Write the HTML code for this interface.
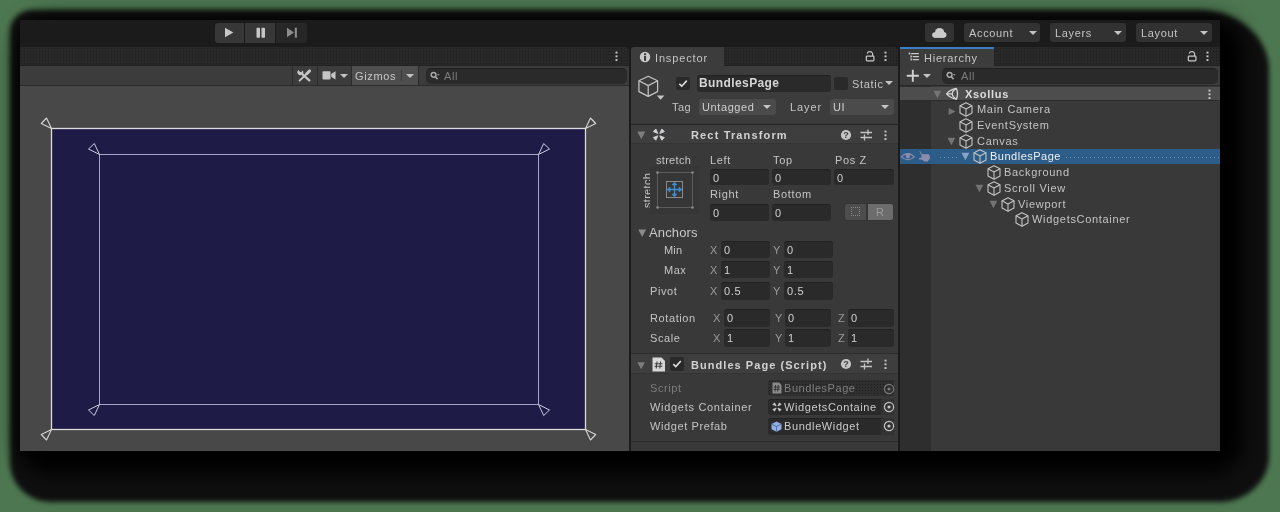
<!DOCTYPE html>
<html><head><meta charset="utf-8">
<style>
*{box-sizing:border-box;margin:0;padding:0}
html,body{width:1280px;height:512px;overflow:hidden;background:#4d7751;font-family:"Liberation Sans",sans-serif;}
#root{position:absolute;left:0;top:0;width:1280px;height:512px;will-change:transform}
.a{position:absolute}
#shadow{left:10px;top:10px;width:1259px;height:492px;background:#0f0f0f;border-radius:22px 70px 50px 40px / 22px 60px 46px 40px;filter:blur(2.6px)}
#shadow2{left:18px;top:18px;width:1225px;height:455px;background:#000;border-radius:30px;filter:blur(10px)}
#win{left:20px;top:20px;width:1200px;height:431px;background:#1b1b1b}
.dots{background-color:#282828;background-image:radial-gradient(circle,#1e1e1e 0.6px,transparent 0.9px);background-size:3px 3px;}
.t{position:absolute;white-space:nowrap;color:#c4c4c4;font-size:11px;line-height:12px;letter-spacing:.65px}
.b{font-weight:bold}
.fld{position:absolute;background:#2a2a2a;border-radius:3px;border-top:1px solid #212121}
.btn{position:absolute;background:#323232;border-radius:3px}
.arr{position:absolute;width:0;height:0;border-left:4px solid transparent;border-right:4px solid transparent;border-top:4.5px solid #c4c4c4}
.menu{position:absolute;width:3px;height:10px;background:radial-gradient(circle,#c8c8c8 0.9px,transparent 1.3px);background-size:3px 3.75px;background-position:0 -0.3px}
.sep{position:absolute;background:#2b2b2b}
</style></head><body><div id="root">
<div id="shadow" class="a"></div>
<div id="shadow2" class="a"></div>
<div id="win" class="a"></div>

<!-- ===== top toolbar ===== -->
<div class="btn" style="left:215px;top:23px;width:29px;height:20px;background:#373737;border-radius:3px 0 0 3px"></div>
<div class="btn" style="left:245px;top:23px;width:30px;height:20px;background:#373737;border-radius:0"></div>
<div class="btn dots" style="left:276px;top:23px;width:31px;height:20px;background-color:#272727;border-radius:0 3px 3px 0"></div>
<svg class="a" style="left:224px;top:27px" width="10" height="11"><path d="M1 0.7 L9.4 5.5 L1 10.3Z" fill="#c6c6c6"/></svg>
<svg class="a" style="left:256px;top:27px" width="10" height="11"><rect x="0.5" y="0.7" width="3.5" height="10" rx="0.8" fill="#c6c6c6"/><rect x="5.5" y="0.7" width="3.5" height="10" rx="0.8" fill="#c6c6c6"/></svg>
<svg class="a" style="left:286px;top:27px" width="12" height="11"><path d="M1 0.7 L8 5.5 L1 10.3Z" fill="#8c8c8c"/><rect x="8.8" y="0.7" width="2.1" height="10" fill="#8c8c8c"/></svg>

<div class="btn" style="left:925px;top:23px;width:29px;height:19px"></div>
<svg class="a" style="left:930px;top:26px" width="18" height="14" viewBox="930 26 18 14"><g fill="#cacaca"><circle cx="939.6" cy="32.6" r="4.6"/><circle cx="934.9" cy="35" r="2.8"/><circle cx="943.6" cy="34.8" r="2.9"/><rect x="934.5" y="34" width="9" height="3.9"/></g></svg>
<div class="btn" style="left:964px;top:23px;width:76px;height:19px"></div>
<div class="btn" style="left:1050px;top:23px;width:76px;height:19px"></div>
<div class="btn" style="left:1136px;top:23px;width:76px;height:19px"></div>
<div class="t" style="left:969px;top:27px">Account</div>
<div class="t" style="left:1055px;top:27px">Layers</div>
<div class="t" style="left:1141px;top:27px">Layout</div>
<div class="arr" style="left:1029px;top:31px"></div>
<div class="arr" style="left:1114px;top:31px"></div>
<div class="arr" style="left:1200px;top:31px"></div>

<!-- ===== scene panel ===== -->
<div class="a dots" style="left:20px;top:47px;width:609px;height:19px;border-top-right-radius:4px;border-bottom:1px solid #222"></div>
<div class="menu" style="left:615px;top:51px"></div>
<div class="a" style="left:20px;top:66px;width:609px;height:20px;background:#3c3c3c;border-bottom:1px solid #2a2a2a"></div>
<div class="sep" style="left:292px;top:66px;width:1px;height:19px"></div>
<div class="sep" style="left:317px;top:66px;width:1px;height:19px"></div>
<div class="sep" style="left:351px;top:66px;width:1px;height:19px"></div>
<div class="a" style="left:352px;top:66px;width:66px;height:19px;background:#4e4e4e"></div>
<div class="sep" style="left:418px;top:66px;width:1px;height:19px"></div>
<svg class="a" style="left:296px;top:67px" width="17" height="17" viewBox="296 67 17 17">
  <path d="M302.2 74.2 L309.3 80.4" stroke="#c6c6c6" stroke-width="2.3" stroke-linecap="round"/>
  <path d="M298.6 69.9 A2.9 2.9 0 1 0 302.6 70.4 L301.2 72.3 L299.8 71.7 Z" fill="#c6c6c6"/>
  <path d="M299.6 80.6 L307.3 73.2" stroke="#c6c6c6" stroke-width="2" stroke-linecap="round"/>
  <path d="M306.8 73.6 L309.6 70.9" stroke="#c6c6c6" stroke-width="2.9" stroke-linecap="round"/>
</svg>
<svg class="a" style="left:322px;top:71px" width="14" height="9"><rect x="0.5" y="0.3" width="8" height="8.2" rx="0.8" fill="#c6c6c6"/><path d="M9.2 3 L13.5 0.3 L13.5 8.5 L9.2 5.8Z" fill="#c6c6c6"/></svg>
<div class="arr" style="left:340px;top:74px"></div>
<div class="t" style="left:355px;top:70px;color:#c8c8c8">Gizmos</div>
<div class="a" style="left:401px;top:70px;width:1px;height:11px;background:#3a3a3a"></div>
<div class="arr" style="left:406px;top:74px"></div>
<div class="a" style="left:426px;top:68px;width:201px;height:16px;background:#2a2a2a;border-radius:5px;border-top:1px solid #1f1f1f"></div>
<svg class="a" style="left:430px;top:71px" width="10" height="10"><circle cx="3.6" cy="3.8" r="2.4" stroke="#a8a8a8" stroke-width="1.5" fill="none"/><path d="M5.2 5.5 L7.6 8.3" stroke="#a8a8a8" stroke-width="1.6"/><path d="M7 3.2 L9.6 3.2 L8.3 4.8Z" fill="#a8a8a8"/></svg>
<div class="t" style="left:444px;top:70px;color:#7c7c7c">All</div>
<div class="a" style="left:20px;top:86px;width:609px;height:365px;background:#484848"></div>
<svg class="a" style="left:20px;top:86px" width="609" height="365" viewBox="20 86 609 365">
  <rect x="51.5" y="128.5" width="534" height="301" fill="#1e1c46" stroke="#dcdcdc" stroke-width="1.3"/>
  <rect x="99.5" y="154.5" width="439" height="250" fill="none" stroke="#a3a6c8" stroke-width="1"/>
  <g fill="none" stroke="#d4d4d4" stroke-width="1.1" stroke-linejoin="round">
    <path d="M51.5 128.5 L46.5 118 L41.3 123.5 Z"/>
    <path d="M585.5 128.5 L590.5 118 L595.7 123.5 Z"/>
    <path d="M51.5 429.5 L46.5 440 L41.3 434.5 Z"/>
    <path d="M585.5 429.5 L590.5 440 L595.7 434.5 Z"/>
  </g>
  <g fill="none" stroke="#c8cbe0" stroke-width="1" stroke-linejoin="round">
    <path d="M99.5 154.5 L94.3 143.5 L88.5 149 Z"/>
    <path d="M538.5 154.5 L543.7 143.5 L549.5 149 Z"/>
    <path d="M99.5 404.5 L94.3 415.5 L88.5 410 Z"/>
    <path d="M538.5 404.5 L543.7 415.5 L549.5 410 Z"/>
  </g>
</svg>

<!-- INSPECTOR -->
<div class="a" style="left:631px;top:66px;width:267px;height:385px;background:#393939"></div>
<div class="a" style="left:631px;top:66px;width:267px;height:57px;background:#3c3c3c"></div>
<div class="a dots" style="left:631px;top:47px;width:267px;height:19px;border-radius:4px 4px 0 0;border-bottom:1px solid #222"></div>
<div class="a" style="left:631px;top:47px;width:93px;height:19px;background:#3c3c3c;border-top-left-radius:3px"></div>
<svg class="a" style="left:639px;top:51px" width="12" height="12"><circle cx="6" cy="6" r="5.2" fill="#c8c8c8"/><rect x="5" y="2.3" width="2.1" height="1.9" fill="#3c3c3c"/><rect x="5" y="5" width="2.1" height="4.8" fill="#3c3c3c"/></svg>
<div class="t" style="left:655px;top:52px;letter-spacing:.85px">Inspector</div>
<svg class="a" style="left:864px;top:50px" width="12" height="12"><path d="M3.2 3.6 A2.8 2.6 0 0 1 8.6 3.6 V6" stroke="#c8c8c8" stroke-width="1.2" fill="none"/><rect x="2.3" y="6.2" width="7.6" height="4.6" rx="0.8" stroke="#c8c8c8" stroke-width="1.2" fill="none"/></svg>
<div class="menu" style="left:884px;top:51px"></div>

<!-- header -->
<svg class="a" style="left:636px;top:74px" width="30" height="28" viewBox="636 74 30 28"><g fill="none" stroke="#c4c4c4" stroke-width="1.25" stroke-linejoin="round"><path d="M648.2 76.3 L657.6 80.8 L657.6 91.6 L648.2 96.4 L638.9 91.6 L638.9 80.8 Z"/><path d="M638.9 80.8 L648.2 85.6 L657.6 80.8 M648.2 85.6 L648.2 96.4"/></g><path d="M656.8 95.6 L664.4 95.6 L660.6 99.8Z" fill="#c4c4c4"/></svg>
<div class="a" style="left:676px;top:77px;width:14px;height:13px;background:#2a2a2a;border-radius:2px"></div>
<svg class="a" style="left:676px;top:77px" width="14" height="13"><path d="M3.3 6.8 L5.8 9.2 L10.8 3.6" stroke="#e0e0e0" stroke-width="1.6" fill="none"/></svg>
<div class="fld" style="left:697px;top:75px;width:134px;height:17px"></div>
<div class="t b" style="left:699px;top:76px;font-size:12px;line-height:14px;letter-spacing:.4px;color:#d6d6d6">BundlesPage</div>
<div class="a" style="left:834px;top:77px;width:14px;height:13px;background:#2a2a2a;border-radius:2px"></div>
<div class="t" style="left:852px;top:78px;letter-spacing:.7px">Static</div>
<div class="arr" style="left:885px;top:81px"></div>
<div class="t" style="left:672px;top:101px;letter-spacing:.5px">Tag</div>
<div class="a" style="left:699px;top:99px;width:77px;height:16px;background:#4b4b4b;border-radius:3px"></div>
<div class="t" style="left:702px;top:101px;letter-spacing:.6px;color:#cfcfcf">Untagged</div>
<div class="arr" style="left:763px;top:105px"></div>
<div class="t" style="left:790px;top:101px;letter-spacing:.9px">Layer</div>
<div class="a" style="left:830px;top:99px;width:64px;height:16px;background:#4b4b4b;border-radius:3px"></div>
<div class="t" style="left:833px;top:101px;color:#cfcfcf">UI</div>
<div class="arr" style="left:881px;top:105px"></div>
<div class="a" style="left:631px;top:124px;width:267px;height:1px;background:#242424"></div>

<!-- rect transform header -->
<div class="a" style="left:631px;top:125px;width:267px;height:19px;background:#3e3e3e;border-bottom:1px solid #343434"></div>
<svg class="a" style="left:637px;top:131px" width="9" height="9"><path d="M0.3 0.5 L8.3 0.5 L4.3 8.3Z" fill="#7e7e7e"/></svg>
<svg class="a" style="left:652px;top:128px" width="14" height="14" viewBox="652 128 14 14"><g fill="#cfcfd4" stroke="#cfcfd4" stroke-width="1" stroke-linejoin="round"><path d="M653.3 131.6 L655.8 129 L657.8 133.4Z"/><path d="M664.3 131.6 L661.8 129 L659.8 133.4Z"/><path d="M653.3 137.6 L655.8 140.2 L657.8 135.8Z"/><path d="M664.3 137.6 L661.8 140.2 L659.8 135.8Z"/></g></svg>
<div class="t b" style="left:691px;top:129px;letter-spacing:1.15px;color:#d2d2d2">Rect Transform</div>
<svg class="a" style="left:840px;top:129px" width="12" height="12"><circle cx="6" cy="6" r="5.1" fill="#c4c4c4"/><text x="6" y="9.3" font-family="Liberation Sans" font-weight="bold" font-size="9" text-anchor="middle" fill="#3e3e3e">?</text></svg>
<svg class="a" style="left:860px;top:129px" width="13" height="12"><g stroke="#c4c4c4" stroke-width="1.3"><path d="M0.5 3.5 H12 M0.5 8.5 H12"/><path d="M8 0.5 V6 M4.5 5.5 V11.5"/></g></svg>
<div class="menu" style="left:884px;top:130px"></div>

<!-- rect transform body -->
<div class="t" style="left:656px;top:154px;letter-spacing:.3px">stretch</div>
<div class="t" style="left:641px;top:208px;letter-spacing:.3px;transform:rotate(-90deg);transform-origin:0 0">stretch</div>
<div class="a" style="left:650px;top:166px;width:49px;height:48px;background:#363636"></div>
<div class="a" style="left:657px;top:172px;width:36px;height:36px;border:1px solid #5c5c5c"></div><svg class="a" style="left:655px;top:170px" width="40" height="40"><g fill="#8a8a8a"><circle cx="2.5" cy="2.5" r="1.3"/><circle cx="37.5" cy="2.5" r="1.3"/><circle cx="2.5" cy="37.5" r="1.3"/><circle cx="37.5" cy="37.5" r="1.3"/></g></svg>
<div class="a" style="left:666px;top:181px;width:17px;height:17px;border:1px solid #8a8a8a"></div>
<svg class="a" style="left:666px;top:181px" width="17" height="17"><g stroke="#3f90d6" stroke-width="1.3" fill="#3f90d6"><path d="M8.5 3 V14 M3 8.5 H14" fill="none"/><path d="M8.5 1 L6 4 H11Z" stroke-width="0.5"/><path d="M8.5 16 L6 13 H11Z" stroke-width="0.5"/><path d="M1 8.5 L4 6 V11Z" stroke-width="0.5"/><path d="M16 8.5 L13 6 V11Z" stroke-width="0.5"/></g></svg>

<div class="t" style="left:710px;top:154px">Left</div>
<div class="t" style="left:773px;top:154px">Top</div>
<div class="t" style="left:835px;top:154px">Pos Z</div>
<div class="fld" style="left:710px;top:169px;width:59px;height:16px"></div>
<div class="fld" style="left:772px;top:169px;width:59px;height:16px"></div>
<div class="fld" style="left:834px;top:169px;width:60px;height:16px"></div>
<div class="t" style="left:713px;top:172px;color:#d0d0d0">0</div>
<div class="t" style="left:775px;top:172px;color:#d0d0d0">0</div>
<div class="t" style="left:837px;top:172px;color:#d0d0d0">0</div>
<div class="t" style="left:710px;top:188px">Right</div>
<div class="t" style="left:773px;top:188px">Bottom</div>
<div class="fld" style="left:710px;top:204px;width:59px;height:17px"></div>
<div class="fld" style="left:772px;top:204px;width:59px;height:17px"></div>
<div class="t" style="left:713px;top:207px;color:#d0d0d0">0</div>
<div class="t" style="left:775px;top:207px;color:#d0d0d0">0</div>
<div class="a" style="left:844px;top:203px;width:23px;height:18px;background:#4d4d4d;border-radius:3px 0 0 3px;border:1px solid #353535"></div>
<div class="a" style="left:867px;top:203px;width:27px;height:18px;background:#6c6c6c;border-radius:0 3px 3px 0;border:1px solid #353535"></div>
<div class="a" style="left:851px;top:207px;width:9px;height:9px;border:1px dotted #888"></div>
<div class="t" style="left:876px;top:206px;color:#9a9a9a;font-size:11px">R</div>

<svg class="a" style="left:638px;top:229px" width="9" height="9"><path d="M0.3 0.5 L8.1 0.5 L4.2 8Z" fill="#8a8a8a"/></svg>
<div class="t" style="left:649px;top:226px;font-size:13px;line-height:14px;letter-spacing:.15px;color:#c8c8c8">Anchors</div>
<div class="t" style="left:664px;top:244px;letter-spacing:.2px">Min</div>
<div class="t" style="left:664px;top:264px;letter-spacing:.5px">Max</div>
<div class="t" style="left:650px;top:285px;letter-spacing:.6px">Pivot</div>
<div class="t" style="left:710px;top:244px;color:#9a9a9a">X</div>
<div class="t" style="left:710px;top:264px;color:#9a9a9a">X</div>
<div class="t" style="left:710px;top:285px;color:#9a9a9a">X</div>
<div class="t" style="left:773px;top:244px;color:#9a9a9a">Y</div>
<div class="t" style="left:773px;top:264px;color:#9a9a9a">Y</div>
<div class="t" style="left:773px;top:285px;color:#9a9a9a">Y</div>
<div class="fld" style="left:721px;top:241px;width:49px;height:17px"></div>
<div class="fld" style="left:784px;top:241px;width:49px;height:17px"></div>
<div class="fld" style="left:721px;top:261px;width:49px;height:17px"></div>
<div class="fld" style="left:784px;top:261px;width:49px;height:17px"></div>
<div class="fld" style="left:721px;top:282px;width:49px;height:18px"></div>
<div class="fld" style="left:784px;top:282px;width:49px;height:18px"></div>
<div class="t" style="left:724px;top:244px;color:#d0d0d0">0</div>
<div class="t" style="left:787px;top:244px;color:#d0d0d0">0</div>
<div class="t" style="left:724px;top:264px;color:#d0d0d0">1</div>
<div class="t" style="left:787px;top:264px;color:#d0d0d0">1</div>
<div class="t" style="left:724px;top:285px;color:#d0d0d0">0.5</div>
<div class="t" style="left:787px;top:285px;color:#d0d0d0">0.5</div>

<div class="t" style="left:650px;top:312px;letter-spacing:.6px">Rotation</div>
<div class="t" style="left:650px;top:332px;letter-spacing:.6px">Scale</div>
<div class="t" style="left:713px;top:312px;color:#9a9a9a">X</div>
<div class="t" style="left:713px;top:332px;color:#9a9a9a">X</div>
<div class="t" style="left:775px;top:312px;color:#9a9a9a">Y</div>
<div class="t" style="left:775px;top:332px;color:#9a9a9a">Y</div>
<div class="t" style="left:838px;top:312px;color:#9a9a9a">Z</div>
<div class="t" style="left:838px;top:332px;color:#9a9a9a">Z</div>
<div class="fld" style="left:724px;top:309px;width:46px;height:18px"></div>
<div class="fld" style="left:785px;top:309px;width:46px;height:18px"></div>
<div class="fld" style="left:848px;top:309px;width:46px;height:18px"></div>
<div class="fld" style="left:724px;top:329px;width:46px;height:18px"></div>
<div class="fld" style="left:785px;top:329px;width:46px;height:18px"></div>
<div class="fld" style="left:848px;top:329px;width:46px;height:18px"></div>
<div class="t" style="left:727px;top:312px;color:#d0d0d0">0</div>
<div class="t" style="left:788px;top:312px;color:#d0d0d0">0</div>
<div class="t" style="left:851px;top:312px;color:#d0d0d0">0</div>
<div class="t" style="left:727px;top:332px;color:#d0d0d0">1</div>
<div class="t" style="left:788px;top:332px;color:#d0d0d0">1</div>
<div class="t" style="left:851px;top:332px;color:#d0d0d0">1</div>
<div class="a" style="left:631px;top:353px;width:267px;height:1px;background:#2c2c2c"></div>

<!-- script header -->
<div class="a" style="left:631px;top:354px;width:267px;height:20px;background:#3e3e3e;border-bottom:1px solid #343434"></div>
<svg class="a" style="left:637px;top:362px" width="9" height="8"><path d="M0.3 0.3 L8 0.3 L4.15 7.3Z" fill="#7e7e7e"/></svg>
<svg class="a" style="left:652px;top:357px" width="14" height="15"><path d="M0.5 0.5 H9.5 L13 4 V14.5 H0.5Z" fill="#d8d8d8"/><g stroke="#3e3e3e" stroke-width="1.1"><path d="M5 4.5 L4.2 11.5 M8.6 4.5 L7.8 11.5 M2.7 6.7 H10.5 M2.5 9.3 H10.3"/></g></svg>
<div class="a" style="left:670px;top:357px;width:14px;height:14px;background:#2a2a2a;border-radius:2px"></div>
<svg class="a" style="left:670px;top:357px" width="14" height="14"><path d="M3.3 7.2 L5.8 9.6 L10.8 4" stroke="#e0e0e0" stroke-width="1.6" fill="none"/></svg>
<div class="t b" style="left:691px;top:359px;letter-spacing:1.05px;color:#d2d2d2">Bundles Page (Script)</div>
<svg class="a" style="left:840px;top:358px" width="12" height="12"><circle cx="6" cy="6" r="5.1" fill="#c4c4c4"/><text x="6" y="9.3" font-family="Liberation Sans" font-weight="bold" font-size="9" text-anchor="middle" fill="#3e3e3e">?</text></svg>
<svg class="a" style="left:860px;top:358px" width="13" height="12"><g stroke="#c4c4c4" stroke-width="1.3"><path d="M0.5 3.5 H12 M0.5 8.5 H12"/><path d="M8 0.5 V6 M4.5 5.5 V11.5"/></g></svg>
<div class="menu" style="left:884px;top:359px"></div>

<div class="t" style="left:650px;top:382px;letter-spacing:.6px;color:#7c7c7c">Script</div>
<div class="t" style="left:650px;top:401px;letter-spacing:.7px">Widgets Container</div>
<div class="t" style="left:650px;top:420px;letter-spacing:.6px">Widget Prefab</div>
<div class="a dots" style="left:768px;top:380px;width:126px;height:16px;background-color:#2f2f2f;border-radius:3px"></div>
<div class="fld" style="left:768px;top:399px;width:126px;height:16px"></div>
<div class="fld" style="left:768px;top:418px;width:126px;height:17px"></div>
<div class="a" style="left:881px;top:399px;width:13px;height:16px;background:#333;border-radius:0 3px 3px 0"></div>
<div class="a" style="left:881px;top:418px;width:13px;height:17px;background:#333;border-radius:0 3px 3px 0"></div>
<svg class="a" style="left:772px;top:382px" width="10" height="12"><path d="M0.5 0.5 H7 L9.5 3 V11.5 H0.5Z" fill="#8a8a8a"/><g stroke="#2f2f2f" stroke-width="0.9"><path d="M3.6 3 L3 9.5 M6.3 3 L5.7 9.5 M1.8 5 H8 M1.6 7.3 H7.8"/></g></svg>
<div class="t" style="left:784px;top:382px;letter-spacing:.55px;color:#7e7e7e">BundlesPage</div>
<svg class="a" style="left:772px;top:402px" width="10" height="10" viewBox="772 402 10 10"><g fill="#d0d0d0" stroke="#d0d0d0" stroke-width="0.6" stroke-linejoin="round"><path d="M772.8 404.6 L774.6 402.8 L776.2 406Z"/><path d="M781.2 404.6 L779.4 402.8 L777.8 406Z"/><path d="M772.8 409.4 L774.6 411.2 L776.2 408Z"/><path d="M781.2 409.4 L779.4 411.2 L777.8 408Z"/></g></svg>
<div class="a" style="left:784px;top:399px;width:93px;height:16px;overflow:hidden"><div class="t" style="left:0;top:2px;letter-spacing:.6px;color:#cacaca">WidgetsContainer</div></div>
<svg class="a" style="left:771px;top:421px" width="11" height="11"><path d="M5.5 0.5 L10.5 3 V8.3 L5.5 10.8 L0.5 8.3 V3Z" fill="#8fb0e0"/><path d="M0.5 3 L5.5 5.5 L10.5 3 M5.5 5.5 V10.8" stroke="#4a6aa0" stroke-width="0.9" fill="none"/></svg>
<div class="t" style="left:784px;top:420px;letter-spacing:.6px;color:#cacaca">BundleWidget</div>
<svg class="a" style="left:883px;top:383px" width="12" height="12"><circle cx="6" cy="6" r="4.6" stroke="#7a7a7a" stroke-width="1.2" fill="none"/><circle cx="6" cy="6" r="1.6" fill="#7a7a7a"/></svg>
<svg class="a" style="left:883px;top:401px" width="12" height="12"><circle cx="6" cy="6" r="4.6" stroke="#c4c4c4" stroke-width="1.2" fill="none"/><circle cx="6" cy="6" r="1.6" fill="#c4c4c4"/></svg>
<svg class="a" style="left:883px;top:420px" width="12" height="12"><circle cx="6" cy="6" r="4.6" stroke="#c4c4c4" stroke-width="1.2" fill="none"/><circle cx="6" cy="6" r="1.6" fill="#c4c4c4"/></svg>
<div class="a" style="left:631px;top:441px;width:267px;height:1px;background:#2c2c2c"></div>


<!-- HIERARCHY -->
<div class="a" style="left:900px;top:66px;width:320px;height:385px;background:#393939"></div>
<div class="a dots" style="left:900px;top:47px;width:320px;height:19px;border-top-left-radius:4px;border-bottom:1px solid #222"></div>
<div class="a" style="left:900px;top:47px;width:94px;height:19px;background:#3c3c3c;border-top:2px solid #3a7fc6"></div>
<svg class="a" style="left:906px;top:50px" width="16" height="13" viewBox="906 50 16 13"><g fill="#c8c8c8"><circle cx="909.5" cy="53.6" r="1"/><rect x="911" y="52.9" width="8" height="1.4" rx="0.5"/><circle cx="911.3" cy="56.6" r="1"/><rect x="912.9" y="55.9" width="6.1" height="1.4" rx="0.5"/><circle cx="911.3" cy="59.6" r="1"/><rect x="912.9" y="58.9" width="6.1" height="1.4" rx="0.5"/></g><path d="M910.6 54.5 V60" stroke="#7a7a7a" stroke-width="0.6"/></svg>
<div class="t" style="left:924px;top:52px;letter-spacing:.75px">Hierarchy</div>
<svg class="a" style="left:1186px;top:50px" width="12" height="12"><path d="M3.2 3.6 A2.8 2.6 0 0 1 8.6 3.6 V6" stroke="#c8c8c8" stroke-width="1.2" fill="none"/><rect x="2.3" y="6.2" width="7.6" height="4.6" rx="0.8" stroke="#c8c8c8" stroke-width="1.2" fill="none"/></svg>
<div class="menu" style="left:1206px;top:51px"></div>
<div class="a" style="left:900px;top:66px;width:320px;height:20px;background:#3c3c3c;border-bottom:1px solid #2a2a2a"></div>
<svg class="a" style="left:906px;top:69px" width="14" height="14"><path d="M6.8 0.8 V12.8 M0.8 6.8 H12.8" stroke="#d0d0d0" stroke-width="1.9"/></svg>
<div class="arr" style="left:923px;top:74px"></div>
<div class="a" style="left:942px;top:68px;width:276px;height:16px;background:#2a2a2a;border-radius:5px;border-top:1px solid #1f1f1f"></div>
<svg class="a" style="left:946px;top:71px" width="10" height="10"><circle cx="3.6" cy="3.8" r="2.4" stroke="#a8a8a8" stroke-width="1.5" fill="none"/><path d="M5.2 5.5 L7.6 8.3" stroke="#a8a8a8" stroke-width="1.6"/><path d="M7 3.2 L9.6 3.2 L8.3 4.8Z" fill="#a8a8a8"/></svg>
<div class="t" style="left:961px;top:70px;color:#7c7c7c">All</div>

<!-- tree -->
<div class="a" style="left:900px;top:86px;width:31px;height:365px;background:#2e2e2e"></div>
<div class="a" style="left:900px;top:87px;width:320px;height:14px;background:#4d4d4d;border-bottom:1px solid #2c2c2c"></div>
<div class="a" style="left:900px;top:149px;width:320px;height:15px;background:#2c5d89"></div>
<svg width="0" height="0" style="position:absolute"><defs>
  <symbol id="cube" viewBox="0 0 14 15"><g fill="none" stroke="#c4c4c4" stroke-width="1.1" stroke-linejoin="round"><path d="M7 0.8 L13 3.8 L13 11 L7 14.2 L1 11 L1 3.8 Z"/><path d="M1 3.8 L7 7 L13 3.8 M7 7 L7 14.2"/></g></symbol>
  <symbol id="tri" viewBox="0 0 9 9"><path d="M0.5 0.8 L8.3 0.8 L4.4 8.3Z" fill="#747474"/></symbol>
  <symbol id="tril" viewBox="0 0 9 9"><path d="M0.8 0.5 L8.3 4.5 L0.8 8.5Z" fill="#747474"/></symbol>
</defs></svg>
<svg class="a" style="left:933px;top:90px" width="9" height="9"><use href="#tri"/></svg>
<svg class="a" style="left:945px;top:87px" width="14" height="14" viewBox="945 87 14 14"><g fill="none" stroke="#d6d6d6" stroke-width="1.3" stroke-linejoin="round"><path d="M946.6 93.8 Q950.2 89.6 956.4 88.4 Q958.6 93.8 956.4 99.2 Q950.2 98 946.6 93.8Z"/><path d="M946.6 93.8 H952.2 M956.4 88.4 Q952.4 90.6 952.2 93.8 Q952.4 97 956.4 99.2"/></g></svg>
<div class="t b" style="left:965px;top:88px;letter-spacing:.7px;color:#dcdcdc">Xsollus</div>
<div class="menu" style="left:1208px;top:89px"></div>

<svg class="a" style="left:948px;top:107px" width="8" height="9"><use href="#tril"/></svg>
<svg class="a" style="left:959px;top:102px" width="14" height="15"><use href="#cube"/></svg>
<div class="t" style="left:977px;top:103px;letter-spacing:.7px">Main Camera</div>

<svg class="a" style="left:959px;top:118px" width="14" height="15"><use href="#cube"/></svg>
<div class="t" style="left:977px;top:119px;letter-spacing:.7px">EventSystem</div>

<svg class="a" style="left:947px;top:137px" width="9" height="9"><use href="#tri"/></svg>
<svg class="a" style="left:959px;top:134px" width="14" height="15"><use href="#cube"/></svg>
<div class="t" style="left:977px;top:135px;letter-spacing:.7px">Canvas</div>

<svg class="a" style="left:900px;top:151px" width="16" height="11" viewBox="900 151 16 11"><path d="M901.3 156.9 Q907.9 150.5 914.5 156.9 Q907.9 162.5 901.3 156.9Z" fill="none" stroke="#8a8cae" stroke-width="1.2"/><path d="M905.2 153.6 H910.6 L909.6 157.4 Q907.9 159.2 906.2 157.4Z" fill="#8a8cae"/></svg>
<svg class="a" style="left:918px;top:150px" width="14" height="13" viewBox="918 150 14 13"><path d="M919.3 151.2 L920.6 151.4 L921.6 154 L928.6 154.2 L929.9 156 L929.9 158.6 L927.6 161.4 L924.4 161.6 L921.6 159.4 L919 159.4 L919 158 L921.4 157.6 L921.5 155.4Z" fill="#8a8cae"/></svg>
<div class="a" style="left:940px;top:157px;width:20px;height:1px;background-image:linear-gradient(90deg,#6d8fb8 1px,transparent 1px);background-size:4px 1px"></div>
<div class="a" style="left:1066px;top:157px;width:154px;height:1px;background-image:linear-gradient(90deg,#6d8fb8 1px,transparent 1px);background-size:4px 1px"></div>
<svg class="a" style="left:961px;top:152px" width="9" height="9"><path d="M0.5 0.8 L8.3 0.8 L4.4 8.3Z" fill="#8aa4c4"/></svg>
<svg class="a" style="left:973px;top:149px" width="14" height="15"><use href="#cube"/></svg>
<div class="t" style="left:990px;top:150px;letter-spacing:.5px;color:#f0f0f0">BundlesPage</div>

<svg class="a" style="left:987px;top:165px" width="14" height="15"><use href="#cube"/></svg>
<div class="t" style="left:1004px;top:166px;letter-spacing:.7px">Background</div>

<svg class="a" style="left:975px;top:184px" width="9" height="9"><use href="#tri"/></svg>
<svg class="a" style="left:987px;top:181px" width="14" height="15"><use href="#cube"/></svg>
<div class="t" style="left:1004px;top:182px;letter-spacing:.7px">Scroll View</div>

<svg class="a" style="left:989px;top:200px" width="9" height="9"><use href="#tri"/></svg>
<svg class="a" style="left:1001px;top:197px" width="14" height="15"><use href="#cube"/></svg>
<div class="t" style="left:1018px;top:198px;letter-spacing:.7px">Viewport</div>

<svg class="a" style="left:1015px;top:212px" width="14" height="15"><use href="#cube"/></svg>
<div class="t" style="left:1032px;top:213px;letter-spacing:.69px">WidgetsContainer</div>


</div></body></html>
